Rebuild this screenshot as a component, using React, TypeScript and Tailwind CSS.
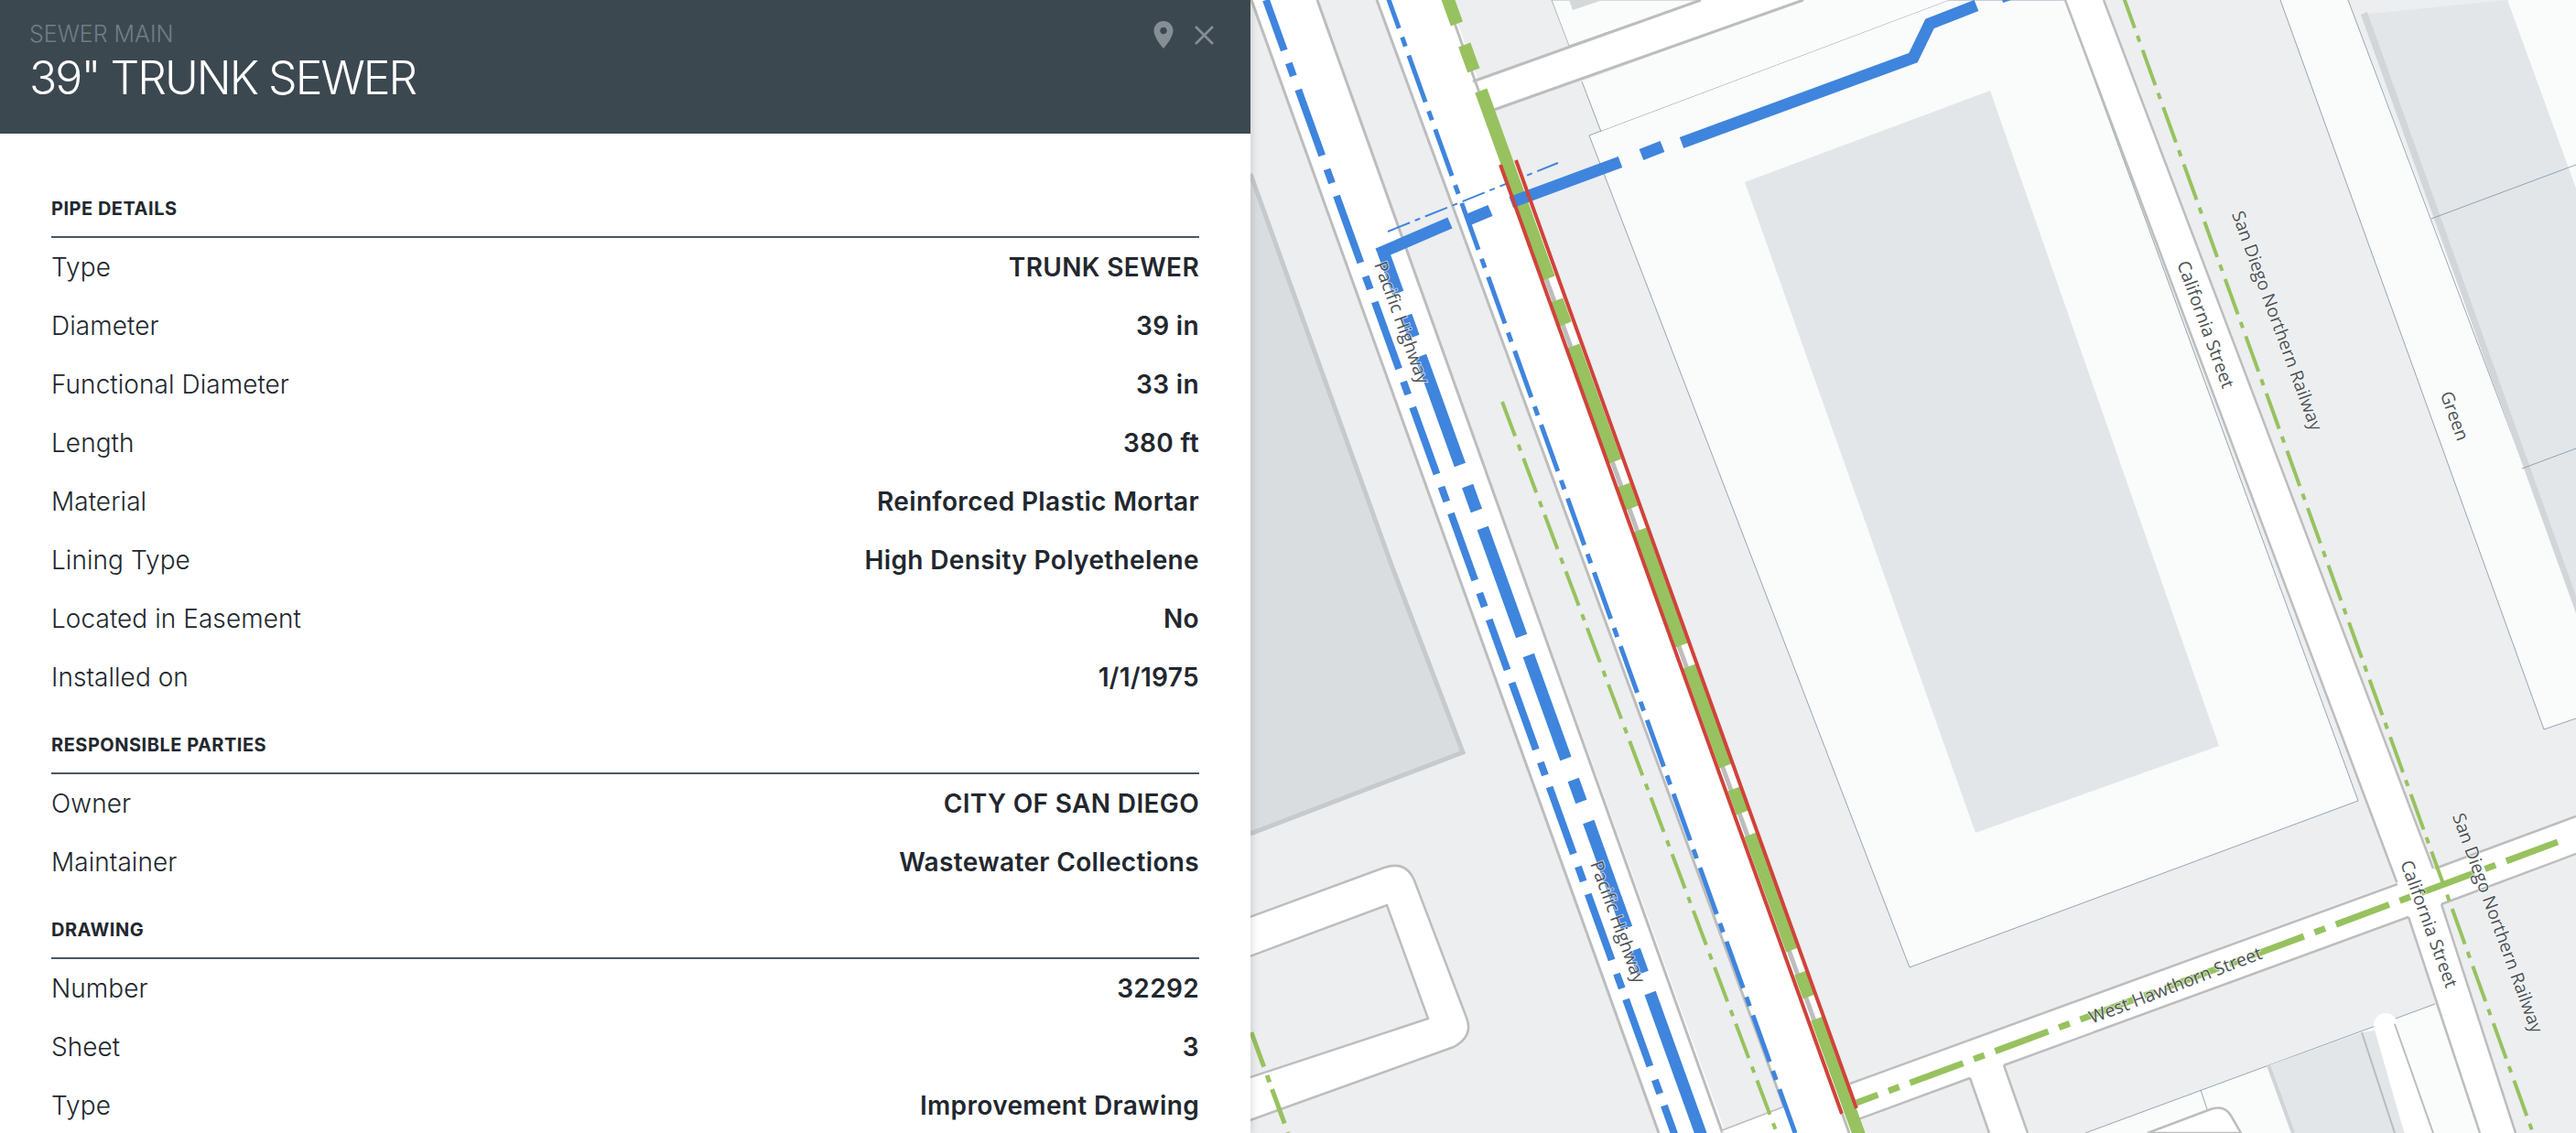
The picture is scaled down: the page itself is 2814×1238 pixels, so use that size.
const rows1 = [
  ["Type", "TRUNK SEWER"],
  ["Diameter", "39 in"],
  ["Functional Diameter", "33 in"],
  ["Length", "380 ft"],
  ["Material", "Reinforced Plastic Mortar"],
  ["Lining Type", "High Density Polyethelene"],
  ["Located in Easement", "No"],
  ["Installed on", "1/1/1975"],
];
const rows2 = [
  ["Owner", "CITY OF SAN DIEGO"],
  ["Maintainer", "Wastewater Collections"],
];
const rows3 = [
  ["Number", "32292"],
  ["Sheet", "3"],
  ["Type", "Improvement Drawing"],
];

function Section({ title, rows }: { title: string; rows: string[][] }) {
  return (
    <section>
      <h2 className="pt-[30px] pb-[18px] border-b-2 border-[#4a5761] text-[20px] leading-6 font-bold tracking-[0.5px] text-[#22272e]">{title}</h2>
      {rows.map(([label, value]) => (
        <div key={label} className="h-16 flex items-center justify-between text-[28px]">
          <span className="font-light tracking-[0.05px] text-[#22272e]">{label}</span>
          <span className="font-semibold tracking-[0.35px] text-[#22272e]">{value}</span>
        </div>
      ))}
    </section>
  );
}

// segments along a street: x = x0 + slope * y, drawn between the listed y ranges
function along(x0: number, slope: number, ranges: number[][]) {
  return ranges.map(([a, b]) => `M${x0 + slope * a} ${a}L${x0 + slope * b} ${b}`).join("");
}

const pipeA = [[0, 55], [69, 83], [98, 170], [185, 200], [214, 287], [302, 316], [330, 403], [417, 431], [445, 518], [532, 548], [561, 634], [648, 663], [677, 732], [746, 819], [833, 847], [860, 933], [947, 963], [977, 1049], [1064, 1080], [1092, 1165], [1180, 1195], [1208, 1245]];
const pipeB = [[275, 320], [345, 368], [389, 508], [531, 558], [577, 695], [716, 829], [852, 876], [898, 1014], [1038, 1063], [1085, 1245]];
const greenMain = [[-5, 26], [49, 77], [99, 304], [328, 354], [378, 504], [530, 555], [579, 705], [728, 837], [862, 888], [912, 1038], [1063, 1089], [1113, 1245]];

const gray = "#bdbdbd";
const thin = "#7f909e";
const ground = "#eceef0";
const parcel = "#fafbfb";
const building = "#e3e6e9";
const blue = "#3f85dd";
const green = "#97c25f";

function MapLabel({ x, y, angle, children }: { x: number; y: number; angle: number; children: string }) {
  return (
    <text
      x={x}
      y={y}
      transform={`rotate(${angle} ${x} ${y})`}
      textAnchor="middle"
      dominantBaseline="middle"
      className="font-['Open_Sans'] text-[19.5px] fill-[#4d5256]"
      stroke="#ffffff"
      strokeOpacity={0.6}
      strokeWidth={2}
      paintOrder="stroke"
    >
      {children}
    </text>
  );
}

function SiteMap() {
  return (
    <svg viewBox="1366 0 1448 1238" className="block w-full h-full">
      <rect x="1366" y="0" width="1448" height="1238" fill={ground} />

      {/* parcels */}
      <polygon points="1736,148 2129,0 2256,0 2576,875 2086,1057" fill={parcel} stroke={thin} strokeWidth="0.8" />
      <polygon points="1728,89 1970,0 2129,0 1749,143" fill={parcel} />
      <path d="M1728 89L1749 144" stroke={thin} strokeWidth="0.8" fill="none" />
      <polygon points="1695,0 1858,0 1714,50" fill={parcel} stroke={thin} strokeWidth="0.6" />
      <polygon points="1714,0 1718,11 1751,0" fill="#d4d8d9" />
      <polygon points="2491,0 2565,0 2803,620 2814,650 2814,785 2779,797" fill={parcel} />
      <path d="M2491 0L2779 797L2814 785M2565 0L2814 660" stroke={thin} strokeWidth="0.8" fill="none" />
      <polygon points="2278,1238 2660,1097 2709,1238" fill={parcel} />
      <path d="M2278 1238L2660 1097M2404 1191L2412 1215" stroke={thin} strokeWidth="0.8" fill="none" />
      <polygon points="2660,0 2814,0 2814,206 2739,0" fill={parcel} />

      {/* buildings */}
      <polygon points="1906,199 2174,99 2424,815 2158,910" fill={building} />
      <polygon points="2579,16 2739,0 2814,206 2814,670" fill={building} />
      <polygon points="2579,16 2586,13 2814,651 2814,670" fill="#d2d6d9" />
      <path d="M2656 239L2814 180M2755 512L2814 490" stroke={thin} strokeWidth="0.8" fill="none" />
      <polygon points="1366,190 1521,620 1600,823 1366,912" fill="#d9dde0" />
      <path d="M1366 190L1521 620L1598 822L1366 911" stroke="#c6cacd" strokeWidth="5" fill="none" />
      <polygon points="2478,1164 2580,1128 2616,1238 2505,1238" fill={building} />
      <path d="M2478 1164L2505 1238" stroke="#d0d4d7" strokeWidth="4" fill="none" />
      <polygon points="2580,1128 2600,1125 2640,1238 2616,1238" fill={building} />
      <path d="M2580 1128L2616 1238" stroke="#b8bcc0" strokeWidth="2" fill="none" />

      {/* streets */}
      <polygon points="1367,0 1439,0 1885,1238 1812,1238" fill="#ffffff" />
      <path d="M1367 0L1812 1238M1439 0L1881 1236L1949 1210" stroke={gray} strokeWidth="3" fill="none" />
      <polygon points="1504,0 1583,0 2029,1238 1885,1238 1881,1236 1949,1210" fill="#ffffff" />
      <path d="M1504 0L1949 1210" stroke={gray} strokeWidth="3" fill="none" />
      <polygon points="1600,92 1858,0 1970,0 1625,122" fill="#ffffff" />
      <path d="M1609 89L1858 0M1632 120L1970 0" stroke={gray} strokeWidth="3" fill="none" />
      <path d="M1580 0L2020 1238" stroke={gray} strokeWidth="3" fill="none" />

      <polygon points="2256,0 2298,0 2658,949 2667,988 2748,1238 2709,1238 2631,1002 2619,966" fill="#ffffff" />
      <path d="M2256 0L2619 966M2298 0L2658 949M2631 1002L2709 1238M2667 988L2748 1238" stroke={gray} strokeWidth="2.5" fill="none" />
      <polygon points="2021,1184 2814,892 2814,933 2030,1223" fill="#ffffff" />
      <path d="M2021 1184L2619 966M2660 949L2814 892M2030 1223L2152 1178M2189 1164L2631 1002M2667 988L2814 933" stroke={gray} strokeWidth="2.5" fill="none" />
      <polygon points="2152,1178 2189,1164 2215,1238 2173,1238" fill="#ffffff" />
      <path d="M2152 1178L2173 1238M2189 1164L2215 1238" stroke={gray} strokeWidth="2.5" fill="none" />

      <path d="M2606 1120L2642 1245" stroke="#ffffff" strokeWidth="26" strokeLinecap="round" fill="none" />
      <path d="M2616 1119L2658 1238" stroke={gray} strokeWidth="2" fill="none" />
      <path d="M2346 1238L2415 1212Q2430 1207 2437 1219L2448 1238Z" fill="#ffffff" stroke={gray} strokeWidth="2.5" />

      <path d="M1360 1004L1512 948Q1536 940 1545 962L1602 1112Q1610 1132 1588 1144L1360 1226Z" fill="#ffffff" stroke={gray} strokeWidth="2.5" />
      <polygon points="1360,1047 1515,989 1560,1113 1360,1179" fill={ground} stroke={gray} strokeWidth="2.5" />

      {/* thin green mains */}
      <path d="M1367 1128L1407 1238" stroke={green} strokeWidth="5" strokeDasharray="40 10 8 8" fill="none" />
      <path d="M1641 439L1941 1238" stroke={green} strokeWidth="4" strokeDasharray="40 10 7 9" fill="none" />
      <path d="M2318 -8L2767 1238" stroke={green} strokeWidth="4" strokeDasharray="41 9 7 9.5" fill="none" />
      <path d="M2028 1205L2794 920" stroke={green} strokeWidth="7" strokeDasharray="62 12.4 12.4 12.5" strokeDashoffset="37" fill="none" />

      {/* blue sewer mains */}
      <path d={along(1383, 0.36, pipeA)} stroke={blue} strokeWidth="8" fill="none" />
      <path d={along(1412, 0.36, pipeB)} stroke={blue} strokeWidth="13" fill="none" />
      <path d="M1511 275L1578 246" stroke={blue} strokeWidth="13" strokeLinecap="square" fill="none" />
      <path d="M1604 240L1628 230M1651 221L1770 177M1793 169L1816 160M1837 156L2090 63L2108 26L2159 6M2186 -3L2214 -13" stroke={blue} strokeWidth="13" fill="none" />
      <path d="M1510 -20L1961 1238" stroke={blue} strokeWidth="5" strokeDasharray="54 10.5 10.5 10.7" fill="none" />
      <path d="M1516 253L1702 178" stroke={blue} strokeWidth="2" strokeDasharray="26 6 6 6" fill="none" />

      {/* selected main */}
      <polygon points="1639,180 1656,175 2028,1211 2012,1217" fill="#ffffff" />
      <path d="M1644 180L2018 1215" stroke={gray} strokeWidth="5" fill="none" />
      <path d={along(1582, 0.362, greenMain)} stroke={green} strokeWidth="14" fill="none" />
      <path d="M1651 221L1670 214" stroke={blue} strokeWidth="13" fill="none" />
      <path d="M1639 180L2012 1217M1656 175L2028 1211" stroke="#d0433a" strokeWidth="4" fill="none" />

      <MapLabel x={1530} y={353} angle={70}>Pacific Highway</MapLabel>
      <MapLabel x={1766} y={1008} angle={70}>Pacific Highway</MapLabel>
      <MapLabel x={2408} y={355} angle={70}>California Street</MapLabel>
      <MapLabel x={2652} y={1010} angle={70}>California Street</MapLabel>
      <MapLabel x={2486} y={351} angle={70}>San Diego Northern Railway</MapLabel>
      <MapLabel x={2727} y={1009} angle={70}>San Diego Northern Railway</MapLabel>
      <MapLabel x={2680} y={455} angle={70}>Green</MapLabel>
      <MapLabel x={2377} y={1078} angle={-21}>West Hawthorn Street</MapLabel>
    </svg>
  );
}

export default function App() {
  return (
    <div className="flex h-screen overflow-hidden bg-white font-['Inter',sans-serif]">
      <aside className="relative z-10 w-[1366px] shrink-0 bg-white shadow-[2px_0_8px_rgba(0,0,0,0.12)]">
        <header className="h-[146px] bg-[#3c4850] flex items-start justify-between pl-8 pr-10">
          <div>
            <p className="pt-[22px] text-[25px] leading-[30px] font-light text-[#727d85]">SEWER MAIN</p>
            <h1 className="pt-[3px] text-[50px] leading-[60px] font-light tracking-[-2px] text-white">39" TRUNK SEWER</h1>
          </div>
          <div className="flex items-center gap-[16px] pt-5">
            <svg viewBox="0 0 24 24" className="w-9 h-9 fill-[#868e95]">
              <path d="M12 2C8.13 2 5 5.13 5 9c0 5.25 7 13 7 13s7-7.75 7-13c0-3.87-3.13-7-7-7zm0 9.5c-1.38 0-2.5-1.12-2.5-2.5s1.12-2.5 2.5-2.5 2.5 1.12 2.5 2.5-1.12 2.5-2.5 2.5z" />
            </svg>
            <svg viewBox="0 0 21 21" className="w-[21px] h-[21px] stroke-[#868e95]" strokeWidth="2.6" fill="none">
              <path d="M1 1L20 20M20 1L1 20" />
            </svg>
          </div>
        </header>
        <div className="pt-10 pl-14 pr-14">
          <Section title="PIPE DETAILS" rows={rows1} />
          <Section title="RESPONSIBLE PARTIES" rows={rows2} />
          <Section title="DRAWING" rows={rows3} />
        </div>
      </aside>
      <main className="flex-1 min-w-0">
        <SiteMap />
      </main>
    </div>
  );
}
